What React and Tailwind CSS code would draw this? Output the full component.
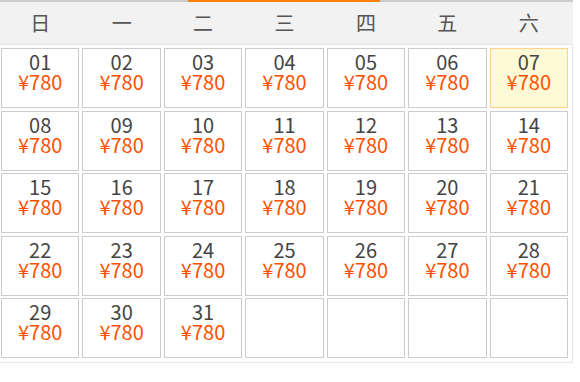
import React from "react";

const heads = ["日", "一", "二", "三", "四", "五", "六"];

export default function App() {
  const cells = [];
  for (let i = 1; i <= 35; i++) cells.push(i);
  return (
    <div className="relative w-[573px] bg-white font-['Noto_Sans_CJK_SC','Noto_Sans',sans-serif]">
      <div className="absolute left-[188px] top-0 h-[2px] w-[192px] bg-[#ff7f00]" />
      <div className="grid h-[45px] grid-cols-7 items-center gap-x-[3px] border-t-2 border-b border-t-[#cccccc] border-b-[#e6e6e6] bg-[#f2f2f2] pl-[1px] pr-[5px]">
        {heads.map((h) => (
          <div key={h} className="text-center text-[20px] leading-[22px] text-[#555555]">
            {h}
          </div>
        ))}
      </div>
      <div className="grid grid-cols-7 gap-x-[3px] gap-y-[2.5px] border-r border-b border-[#e6e6e6] pt-[3px] pb-[4px] pl-[1px] pr-[4px]">
        {cells.map((d) => {
          const hl = d === 7;
          const has = d <= 31;
          return (
            <div
              key={d}
              className={
                "flex h-[60px] flex-col items-center border pt-[3px] " +
                (hl ? "border-[#ffd18c] bg-[#fffad6]" : "border-[#cccccc] bg-white")
              }
            >
              {has && (
                <>
                  <div className="text-[20px] leading-[20px] text-[#444444]">
                    {String(d).padStart(2, "0")}
                  </div>
                  <div className="text-[20px] leading-[20px] text-[#ff5000]">¥780</div>
                </>
              )}
            </div>
          );
        })}
      </div>
    </div>
  );
}
